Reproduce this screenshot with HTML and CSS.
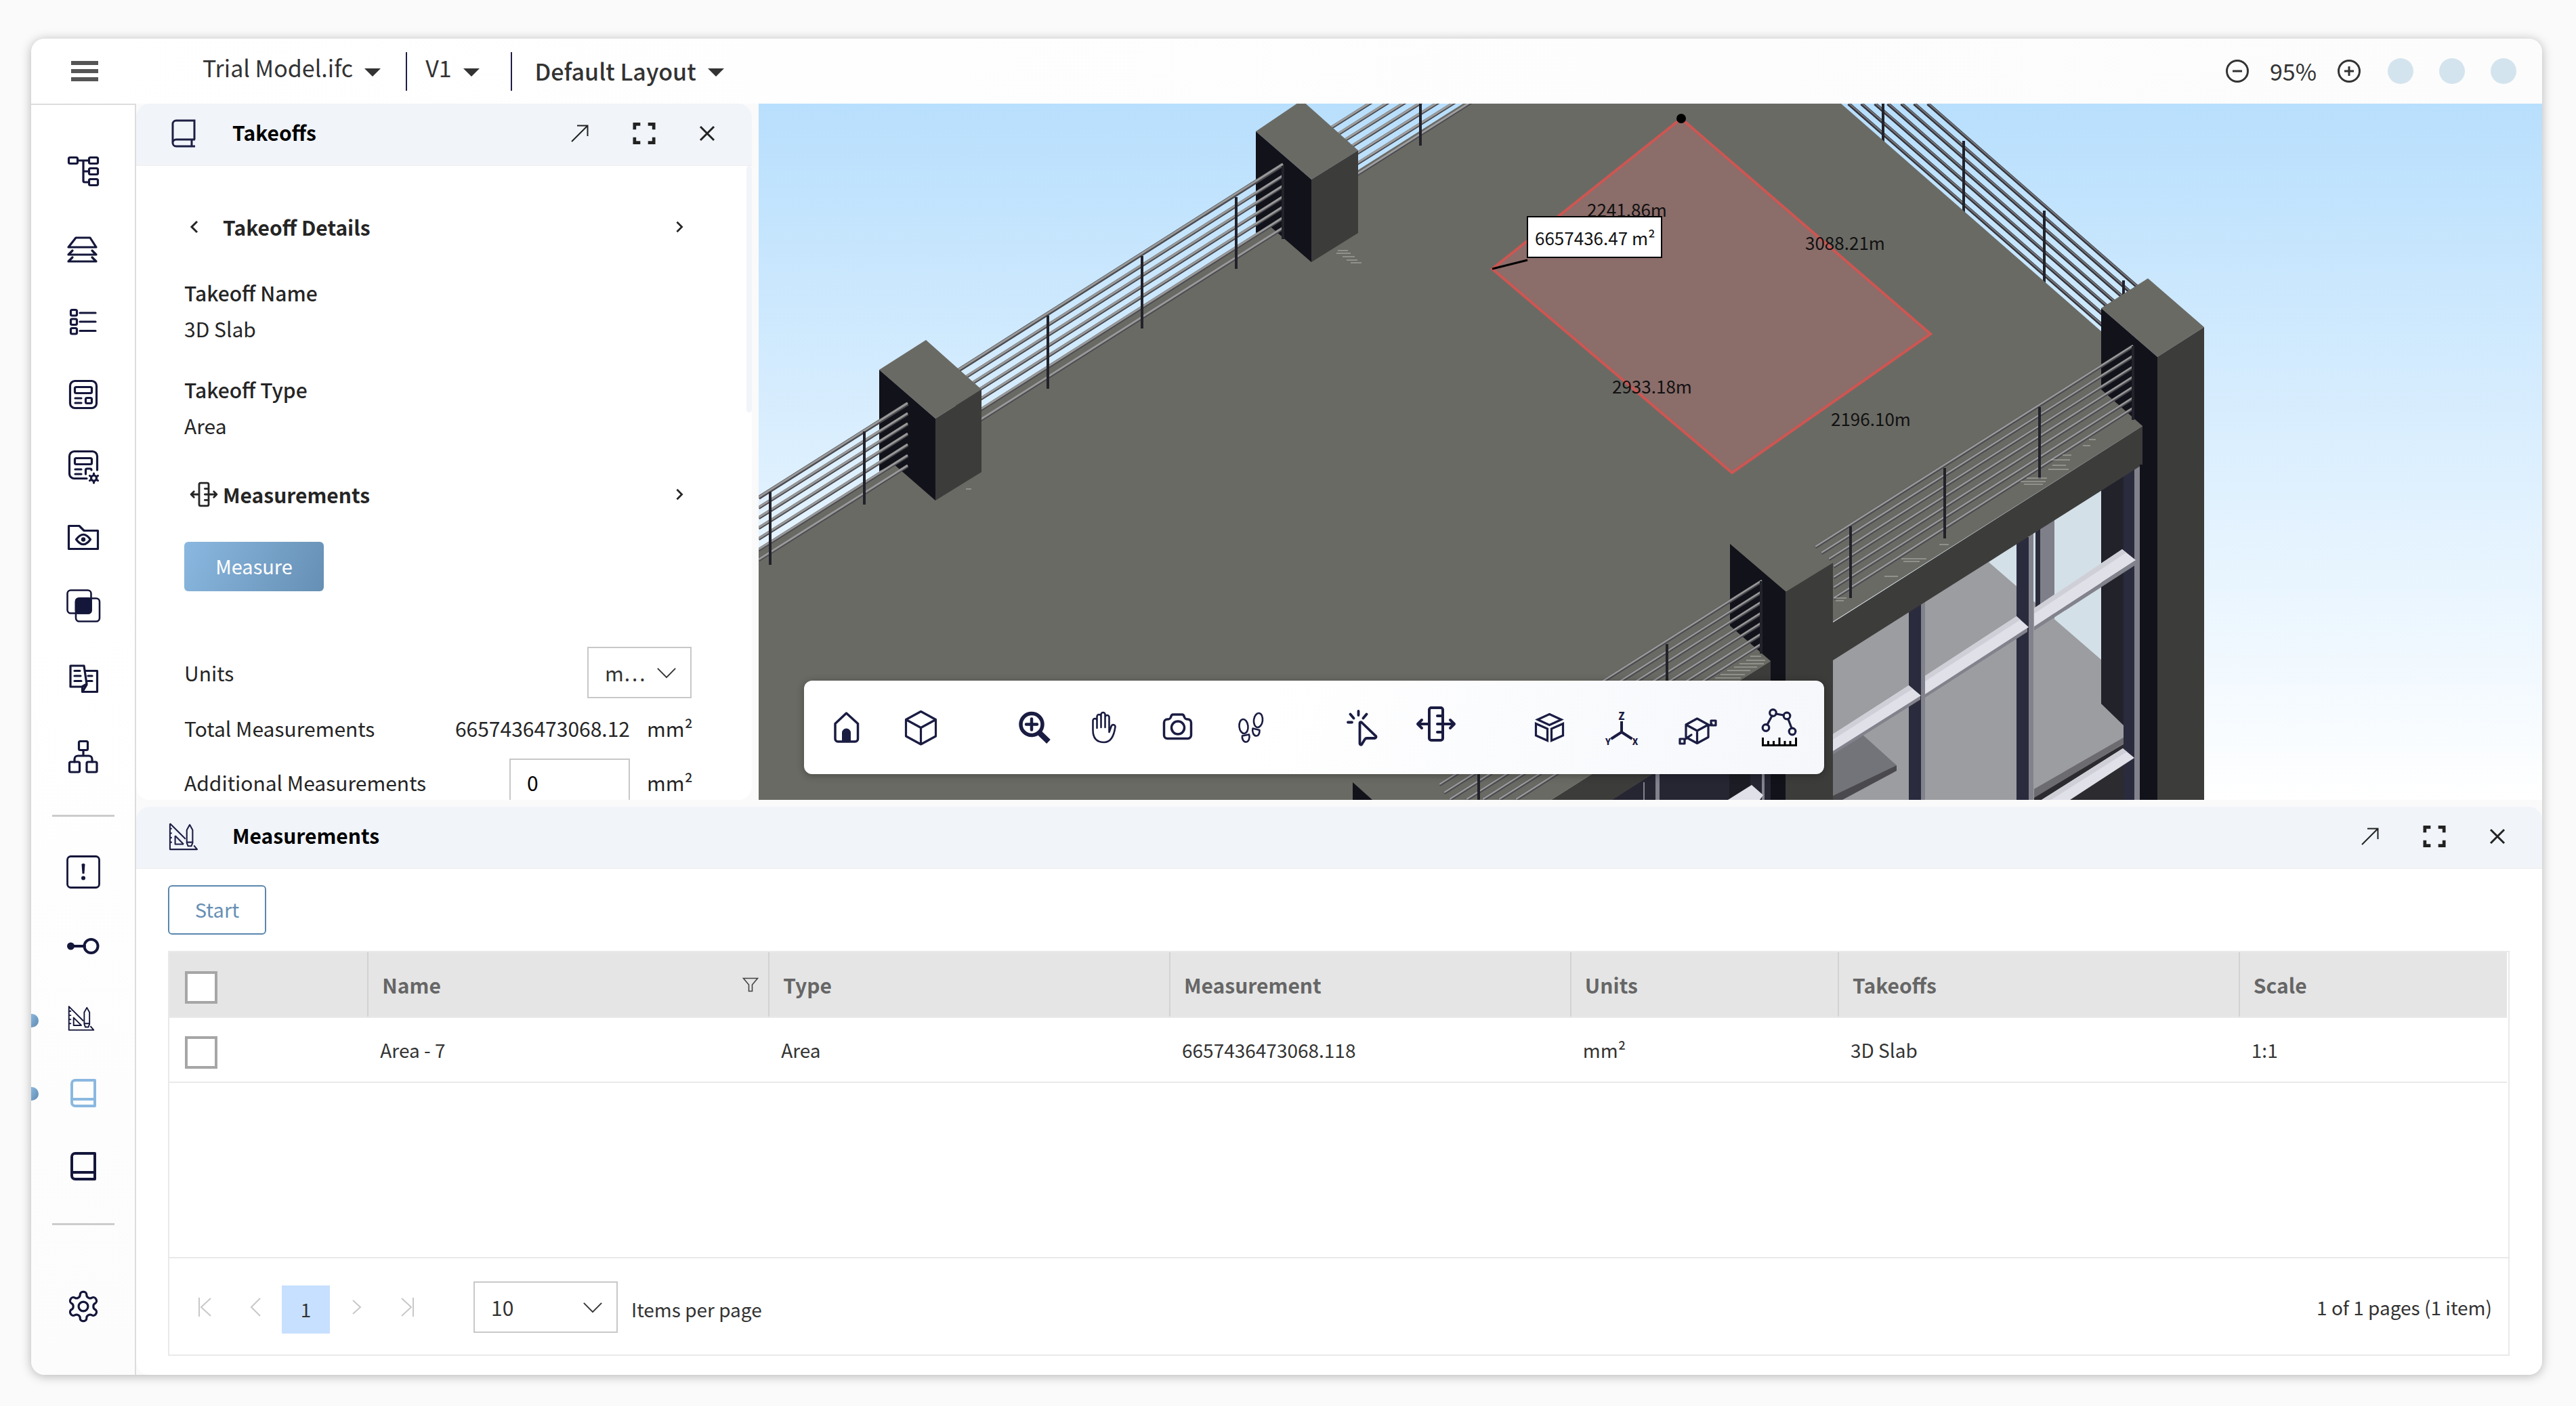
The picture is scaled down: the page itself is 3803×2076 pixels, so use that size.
FILE: index.html
```html
<!DOCTYPE html>
<html lang="en">
<head>
<meta charset="utf-8">
<meta name="viewport" content="width=device-width, initial-scale=1">
<title>Trial Model.ifc – Takeoffs</title>
<link rel="stylesheet" href="styles.css">
</head>
<body>
<svg class="defs" aria-hidden="true">
  <symbol id="i-expand" viewBox="0 0 28 28"><path d="M2 26L25 3M10 2.500H25.500V18" fill="none" stroke="currentColor" stroke-width="2"/></symbol>
  <symbol id="i-full" viewBox="0 0 36 36"><path d="M3 12V3.500H12M24 3.500H33V12M33 24V32.500H24M12 32.500H3V24" fill="none" stroke="currentColor" stroke-width="5"/></symbol>
  <symbol id="i-close" viewBox="0 0 24 24"><path d="M2 2L22 22M22 2L2 22" fill="none" stroke="currentColor" stroke-width="3"/></symbol>
  <symbol id="i-right" viewBox="0 0 14 20"><path d="M3 2L11 10L3 18" fill="none" stroke="currentColor" stroke-width="3"/></symbol>
  <symbol id="i-down" viewBox="0 0 32 18"><path d="M2 2L16 16L30 2" fill="none" stroke="currentColor" stroke-width="2"/></symbol>
  <symbol id="i-caret" viewBox="0 0 24 12"><path d="M0 0H24L12 12Z" fill="currentColor"/></symbol>
  <symbol id="i-ruler" viewBox="0 0 60 54"><g fill="none" stroke="currentColor" stroke-width="4" stroke-linecap="round" stroke-linejoin="round"><rect x="20" y="3" width="20" height="48" rx="3"/><path d="M32 15H39M32 39H39M19 27H3M9 21L3 27L9 33M32 27H57M51 21L57 27L51 33"/></g></symbol>
  <symbol id="i-measure" viewBox="0 0 46 44"><g fill="none" stroke="currentColor" stroke-width="2.200" stroke-linejoin="round"><path d="M2 2V42H44L39 36M2 2L26 26M2 10H5M2 17H5M2 24H5M2 31H5"/><path d="M10 21V34H23M10 21L23 34" /><path d="M28 12L32.500 4L37 12V32L35 37H30L28 32ZM28 31H37"/></g></symbol>
  <symbol id="i-book-thin" viewBox="0 0 36 42"><g fill="none" stroke="currentColor" stroke-width="3"><path d="M34 30V2H7A5 5 0 0 0 2 7V35A5 5 0 0 0 7 40H35M2 35A5 5 0 0 1 7 30H35M30 30V40"/></g></symbol>
  <symbol id="i-book" viewBox="0 0 72 72"><g fill="none" stroke="currentColor" stroke-width="4"><path d="M53 19H24A5 5 0 0 0 19 24V52A5 5 0 0 0 24 57H53ZM19 47H53" stroke-linejoin="round"/></g></symbol>
</svg>

<div class="app">
  <header class="topbar">
    <button class="menu-btn" type="button" aria-label="Menu"><svg viewBox="0 0 40 30"><path d="M0 3H40M0 15H40M0 27H40" stroke="#555" stroke-width="6"/></svg></button>
    <div class="doc">
      <button class="pick pick-model" type="button">Trial Model.ifc <svg class="caret"><use href="#i-caret"/></svg></button>
      <button class="pick pick-version" type="button">V1 <svg class="caret"><use href="#i-caret"/></svg></button>
    </div>
    <button class="pick pick-layout" type="button">Default Layout <svg class="caret"><use href="#i-caret"/></svg></button>
    <div class="zoom">
      <button type="button" aria-label="Zoom out"><svg viewBox="0 0 34 34"><circle cx="17" cy="17" r="15.500" fill="none" stroke="#333" stroke-width="3"/><path d="M10 17H24" stroke="#333" stroke-width="3"/></svg></button>
      <output>95%</output>
      <button type="button" aria-label="Zoom in"><svg viewBox="0 0 34 34"><circle cx="17" cy="17" r="15.500" fill="none" stroke="#333" stroke-width="3"/><path d="M10 17H24M17 10V24" stroke="#333" stroke-width="3"/></svg></button>
    </div>
    <div class="dots"><span></span><span></span><span></span></div>
  </header>

  <nav class="sidebar" aria-label="Tools">
    <div class="group">
      <button type="button" aria-label="Model tree"><svg viewBox="0 0 72 72"><rect x="14.500" y="15.500" width="13" height="9" rx="2"/><rect x="44.500" y="15.500" width="13" height="9" rx="2"/><rect x="44.500" y="31.500" width="13" height="9" rx="2"/><rect x="44.500" y="47.500" width="13" height="9" rx="2"/><path d="M28 20H44M36 20V50a2 2 0 0 0 2 2H44M36 36H44"/></svg></button>
      <button type="button" aria-label="Layers"><svg viewBox="0 0 72 72"><path d="M25 26H46L55 40H14ZM20 45L14 51H55L49 45M20 55L14 61H55L49 55"/></svg></button>
      <button type="button" aria-label="Properties"><svg viewBox="0 0 72 72"><rect x="17.500" y="24.500" width="9" height="8.500" rx="2"/><rect x="17.500" y="38" width="9" height="8.500" rx="2"/><rect x="17.500" y="51.500" width="9" height="8.500" rx="2"/><path d="M31 29H54M31 42H54M31 55.500H54"/></svg></button>
      <button type="button" aria-label="Dashboard"><svg viewBox="0 0 72 72"><rect x="16.500" y="21.500" width="39" height="40" rx="7"/><rect x="23.500" y="30.500" width="25" height="9" rx="2"/><path d="M24 47H33M24 54H33"/><rect x="39.500" y="46.500" width="9" height="8" rx="2"/></svg></button>
      <button type="button" aria-label="Dashboard settings"><svg viewBox="0 0 72 72"><path d="M41 57.500H22.500a7 7 0 0 1-7-7V24.500a7 7 0 0 1 7-7H49.500a7 7 0 0 1 7 7V45"/><rect x="23.500" y="27.500" width="25" height="9" rx="2"/><path d="M24 44H33M24 51H33M39.500 51V45a2 2 0 0 1 2-2H46a2 2 0 0 1 2 2"/><circle cx="51.500" cy="57" r="4"/><path d="M51.500 50V52M51.500 62V64M45.500 53.500L47.500 54.700M55.500 59.300L57.500 60.500M57.500 53.500L55.500 54.700M47.500 59.300L45.500 60.500"/></svg></button>
      <button type="button" aria-label="Views"><svg viewBox="0 0 72 72"><path d="M14.500 19.500H30L37 26.500H57.500V53.500H14.500ZM25.500 39.500Q36 25 46.500 39.500Q36 54 25.500 39.500Z"/><circle class="fill" cx="36" cy="39.500" r="3.200"/></svg></button>
      <button type="button" aria-label="Compare models"><svg viewBox="0 0 72 72"><g stroke-width="2.600"><rect x="12.500" y="6.500" width="35" height="34" rx="5"/><rect x="25" y="18.500" width="35" height="34" rx="5"/><rect x="25" y="18.500" width="22.500" height="22" rx="4" class="solid"/></g></svg></button>
      <button type="button" aria-label="Documents"><svg viewBox="0 0 72 72"><path d="M17 10H37L41 37L34 41H17ZM39 17.500H56.500V48.500H34.500V41M35 48L41 38M23 17.500H31M23 25H32M23 32.500H33M43 25H49M43 32.500H49"/></svg></button>
      <button type="button" aria-label="Hierarchy"><svg viewBox="0 0 72 72"><rect x="29.500" y="13.500" width="13" height="13" rx="2"/><rect x="15.500" y="44" width="15" height="15" rx="2"/><rect x="41" y="44" width="15" height="15" rx="2"/><path d="M36 27V35M23 44V40a5 5 0 0 1 5-5H44a5 5 0 0 1 5 5V44"/></svg></button>
    </div>
    <hr>
    <div class="group">
      <button type="button" aria-label="Issues"><svg viewBox="0 0 72 72"><rect x="12.500" y="12.500" width="47" height="46" rx="5" stroke-width="2.800"/><path class="fill" d="M33.500 24q2.500-2 5 0L37.500 38h-3z"/><circle class="fill" cx="36" cy="44.500" r="3"/></svg></button>
      <button type="button" aria-label="Links"><svg viewBox="0 0 72 72"><circle class="fill" cx="17.500" cy="37" r="5.500"/><g stroke-width="4"><path d="M18 37H38"/><circle cx="47.500" cy="37" r="10"/></g></svg></button>
      <button type="button" class="open" aria-label="Measurements"><svg viewBox="0 0 72 72"><use href="#i-measure" x="13" y="16" width="40" height="39"/></svg></button>
      <button type="button" class="open current" aria-label="Takeoffs"><svg viewBox="0 0 72 72"><use href="#i-book"/></svg></button>
      <button type="button" aria-label="Library"><svg viewBox="0 0 72 72"><use href="#i-book"/></svg></button>
    </div>
    <hr>
    <button type="button" class="settings" aria-label="Settings"><svg viewBox="0 0 24 24"><g><path d="M12.220 2h-.44a2 2 0 0 0-2 2v.18a2 2 0 0 1-1 1.730l-.43.25a2 2 0 0 1-2 0l-.15-.08a2 2 0 0 0-2.730.73l-.22.38a2 2 0 0 0 .73 2.730l.15.1a2 2 0 0 1 1 1.720v.51a2 2 0 0 1-1 1.740l-.15.09a2 2 0 0 0-.73 2.730l.22.38a2 2 0 0 0 2.730.73l.15-.08a2 2 0 0 1 2 0l.43.25a2 2 0 0 1 1 1.730V20a2 2 0 0 0 2 2h.44a2 2 0 0 0 2-2v-.18a2 2 0 0 1 1-1.730l.43-.25a2 2 0 0 1 2 0l.15.08a2 2 0 0 0 2.730-.73l.22-.39a2 2 0 0 0-.73-2.730l-.15-.08a2 2 0 0 1-1-1.740v-.5a2 2 0 0 1 1-1.740l.15-.09a2 2 0 0 0 .73-2.730l-.22-.38a2 2 0 0 0-2.730-.73l-.15.08a2 2 0 0 1-2 0l-.43-.25a2 2 0 0 1-1-1.730V4a2 2 0 0 0-2-2z"/><circle cx="12" cy="12" r="3.200"/></g></svg></button>
  </nav>

  <main class="workspace">
    <section class="panel takeoffs" aria-labelledby="takeoffs-title">
      <div class="panel-head">
        <svg class="head-icon"><use href="#i-book-thin"/></svg>
        <h2 id="takeoffs-title">Takeoffs</h2>
        <div class="panel-tools">
          <button type="button" aria-label="Detach"><svg width="28" height="28"><use href="#i-expand"/></svg></button>
          <button type="button" aria-label="Full screen"><svg width="34" height="34"><use href="#i-full"/></svg></button>
          <button type="button" aria-label="Close"><svg width="24" height="24"><use href="#i-close"/></svg></button>
        </div>
      </div>
      <div class="details">
        <div class="section-row">
          <button type="button" class="lead" aria-label="Back"><svg class="back" width="14" height="22"><use href="#i-right"/></svg></button>
          <h3>Takeoff Details</h3>
          <button type="button" class="more" aria-label="Expand details"><svg width="14" height="18"><use href="#i-right"/></svg></button>
        </div>
        <dl>
          <dt>Takeoff Name</dt><dd>3D Slab</dd>
          <dt>Takeoff Type</dt><dd>Area</dd>
        </dl>
        <div class="section-row">
          <span class="lead"><svg width="42" height="40"><use href="#i-ruler"/></svg></span>
          <h3>Measurements</h3>
          <button type="button" class="more" aria-label="Expand measurements"><svg width="14" height="18"><use href="#i-right"/></svg></button>
        </div>
        <button type="button" class="btn-primary">Measure</button>
        <div class="field units">
          <label for="units">Units</label>
          <span class="select"><select id="units"><option>m…</option></select><svg><use href="#i-down"/></svg></span>
        </div>
        <div class="field total"><span>Total Measurements</span><span class="num">6657436473068.12</span><span class="unit">mm²</span></div>
        <div class="field extra"><label for="extra">Additional Measurements</label><input id="extra" type="text" value="0"><span class="unit">mm²</span></div>
      </div>
    </section>

    <section class="viewer" aria-label="3D view">
      <svg class="scene" viewBox="0 0 2633 1028" preserveAspectRatio="xMidYMid slice">
        <defs>
          <linearGradient id="sky" x1="0" y1="0" x2="0" y2="1"><stop offset="0" stop-color="#b8dffd"/><stop offset="1" stop-color="#fff"/></linearGradient>
        </defs>
        <rect width="2633" height="1028" fill="url(#sky)"/>

        <!-- back right railing -->
        <g stroke="#34343c" stroke-width="5"><path d="M1609 0L1990 333M1628 0L1990 316M1648 0L1995 303M1667 0L2010 300M1687 0L2020 291M1706 0L2028 281M1726 0L2036 271"/></g>
        <g stroke="#77777c" stroke-width="2"><path d="M1609 -1L1990 332M1628 -1L1990 315M1648 -1L1995 302M1667 -1L2010 299M1687 -1L2020 290M1706 -1L2028 280M1726 -1L2036 270"/></g>
        <g stroke="#22222b" stroke-width="4"><path d="M1660 0V58M1779 55V161M1898 158V264M2015 261V290"/></g>

        <!-- roof slab -->
        <path fill="#6a6a64" d="M0 658L1040 0H1598L1983 337L2043 476L1170 1028H0Z"/>

        <!-- glazing under the roof -->
        <path fill="#9c9da1" d="M1586 815L2043 527V1028H1586Z"/>
        <path fill="#d3e0e8" d="M1816 677L1990 560V828Z"/>
        <path fill="#2a2a3a" d="M1885 620H1892V752H1885Z"/>
        <path fill="#7e7f88" d="M1892 612H1913V761L1892 743Z"/>
        <path fill="#22222b" d="M1982 560L2016 540V919L1982 886Z"/>
        <path fill="#73747a" d="M1586 958L1630 932L1680 977L1586 1028Z"/>
        <path fill="#4a4a4e" d="M1680 977V985L1600 1028H1586V1022Z"/>
        <path fill="#2b2b30" d="M1883 1024L2018 944V1028H1883Z"/>
        <path fill="#6c6c70" d="M1883 1012L2022 932V941L1883 1025Z"/>
        <g fill="#2b2b3e"><path d="M1698 740H1716V1028H1698ZM1857 640H1875V1028H1857ZM2015 540H2031V1028H2015Z"/></g>
        <g fill="#82828c"><path d="M1716 730H1722V1028H1716ZM1875 630H1882V1028H1875ZM2031 530H2039V1028H2031Z"/></g>
        <g fill="#82828c"><path d="M1883 772L2033 674V681L1883 778ZM1722 871L1873 774V780L1722 877ZM1586 955L1715 874V880L1586 961Z"/></g>
        <g fill="#e0e0e9"><path d="M1883 745L2013 658L2033 674L1883 772ZM1722 845L1857 757L1875 773L1722 872ZM1586 931L1698 859L1716 874L1586 956ZM1894 1028L2014 952L2031 966L1936 1028Z"/></g>
        <g fill="#cfcfd7"><path d="M1883 745L2013 658L2019 663L1883 753ZM1722 845L1857 757L1863 762L1722 853ZM1586 931L1698 859L1704 864L1586 939ZM1894 1028L2014 952L2020 957L1908 1028Z"/></g>
        <path fill="#262633" d="M1250 1034L1330 982H1500V1028Z"/>
        <path fill="#82828c" d="M1306 1002H1308V1028H1306ZM1324 990H1330V1028H1324ZM1481 990H1485V1028H1481Z"/>
        <path fill="#1c1c24" d="M1433 990H1464V1028H1433Z"/>
        <path fill="#e0e0e9" d="M1431 1028L1466 1006L1483 1021L1478 1028Z"/>

        <!-- roof edge beam -->
        <path fill="#3c3c3b" d="M1586 766L2043 476V533L1586 822ZM1170 1028L1494 823V880L1260 1028Z"/>

        <!-- back left railing, far bay -->
        <g stroke="#4a4a50" stroke-width="5"><path d="M840 39L905 -2M840 55L930 -2M840 70L955 -2M860 73L979 -2M870 82L1004 -2M880 91L1028 -2M880 107L1052 -2"/></g>
        <g stroke="#9d9d9d" stroke-width="3"><path d="M840 38L905 -3M840 54L930 -3M840 69L955 -3M860 72L979 -3M870 81L1004 -3M880 90L1028 -3M880 106L1052 -3"/></g>
        <path stroke="#22222b" stroke-width="4" d="M977 0V62"/>
        <path fill="#6a6a64" d="M802 -5L885 69L816 112L734 41Z"/>
        <path fill="#12121a" d="M734 41L816 112V234L756 182L734 191Z"/>
        <path fill="#3c3c3b" d="M816 112L885 69V191L816 234Z"/>

        <!-- back left railing, middle bay -->
        <g stroke="#4a4a50" stroke-width="5"><path d="M290 397L774 90" stroke-width="6"/><path d="M290 414L774 107M290 429L774 122M290 445L774 138M290 460L774 153M290 476L774 169M290 491L774 184"/></g>
        <g stroke="#999" stroke-width="3"><path d="M290 396L774 89M290 413L774 106M290 428L774 121M290 444L774 137M290 459L774 152M290 475L774 168M290 490L774 183"/></g>
        <path stroke="#22222b" stroke-width="4" d="M427 313V421M566 225V332M705 138V244M774 92V200"/>
        <path fill="#6a6a64" d="M247 349L329 422L261 465L178 393Z"/>
        <path fill="#12121a" d="M178 393L261 465V586L199 532L178 543Z"/>
        <path fill="#3c3c3b" d="M261 465L329 422V544L261 586Z"/>

        <!-- back left railing, near bay -->
        <g stroke="#4a4a50" stroke-width="5"><path d="M0 582L220 443" stroke-width="6"/><path d="M0 597L220 458M0 612L220 473M0 627L220 488M0 643L220 504M0 659L220 520M0 674L220 535"/></g>
        <g stroke="#999" stroke-width="3"><path d="M0 581L220 442M0 596L220 457M0 611L220 472M0 626L220 487M0 642L220 503M0 658L220 519M0 673L220 534"/></g>
        <path stroke="#22222b" stroke-width="4" d="M17 573V681M156 484V592"/>

        <!-- right corner column -->
        <path fill="#6a6a64" d="M2051 258L2134 330L2065 374L1982 302Z"/>
        <path fill="#12121a" d="M1982 302L2065 374V1028H2039V533H2043V476L1982 422Z"/>
        <path fill="#3c3c3b" d="M2065 374L2134 330V1028H2065Z"/>

        <!-- front column -->
        <path fill="#6a6a64" d="M1434 650L1516 721L1586 678L1504 606Z"/>
        <path fill="#12121a" d="M1434 650L1517 721V1028H1494V823L1434 771Z"/>
        <path fill="#3c3c3b" d="M1516 721L1586 678V1028H1516Z"/>
        <path fill="#12121a" d="M877 1002L906 1028H877Z"/>

        <!-- front railings -->
        <g stroke="#4a4a50" stroke-width="5"><path d="M1560 655L2029 358M1569 664L2029 373M1580 673L2029 389M1587 684L2029 404M1587 700L2029 419M1587 715L2029 435M1587 731L2029 450"/><path d="M1005 1006L1481 705M1012 1018L1481 721M1020 1028L1481 736M1045 1028L1481 752M1069 1028L1481 767M1093 1028L1481 783M1118 1028L1481 798"/></g>
        <g stroke="#999" stroke-width="2.500"><path d="M1560 654L2029 357M1569 663L2029 372M1580 672L2029 388M1587 683L2029 403M1587 699L2029 418M1587 714L2029 434M1587 730L2029 449"/><path d="M1005 1005L1481 704M1012 1017L1481 720M1020 1027L1481 735M1045 1027L1481 751M1069 1027L1481 766M1093 1027L1481 782M1118 1027L1481 797"/></g>
        <path stroke="#22222b" stroke-width="4" d="M2029 358V467M1891 448V554M1751 538V642M1612 624V730M1480 705V812M1341 798V905M1063 976V1028"/>
        <path stroke="#b8b8b4" stroke-width="1" d="M1863 558H1900M1868 562H1896M1872 553H1902M1904 540H1934M1910 534H1930M1908 526H1936M1925 519H1938M1955 505H1966M1964 496H1974M1743 651H1757M1687 672H1724M1690 676H1714M1662 698H1682M1588 730H1606M1590 734H1602M1412 848H1450M1420 843H1456M1430 837H1464M1440 832H1474M1448 827H1484M1458 822H1486M1464 816H1480M855 217H870M853 221H874M862 226H880M868 231H884M874 235H890M306 569H314"/>

        <!-- measured area -->
        <path fill="#ce7676" fill-opacity=".34" d="M1362 22L1730 340L1437 545L1083 244Z"/>
        <path fill="none" stroke="#cd5652" stroke-width="4" d="M1362 22L1730 340L1437 545L1083 244Z"/>
        <circle cx="1362" cy="22" r="7"/>
        <path stroke="#000" stroke-width="3" d="M1083 244L1135 231"/>
        <g class="dim">
          <text x="1223" y="167">2241.86m</text>
          <text x="1545" y="216">3088.21m</text>
          <text x="1260" y="428">2933.18m</text>
          <text x="1583" y="476">2196.10m</text>
          <rect x="1135" y="167" width="198" height="60" fill="#fff" stroke="#000" stroke-width="2"/>
          <text x="1146" y="209">6657436.47 m²</text>
        </g>
      </svg>
      <div class="toolbar" role="toolbar" aria-label="View tools">
        <div class="tools">
          <button type="button" aria-label="Home"><svg viewBox="0 0 72 72"><path stroke-width="3.500" d="M35.500 15L19 30.500V53a4 4 0 0 0 4 4H48.500a4 4 0 0 0 4-4V30.500Z"/><path class="fill" d="M29 57V44a6.500 6.500 0 0 1 13 0V57Z"/></svg></button>
          <button type="button" aria-label="Isometric"><svg viewBox="0 0 72 72"><path d="M37.500 12.500L59.500 24.500V49L37.500 61L15.500 49V24.500ZM15.500 24.500L37.500 36.500L59.500 24.500M37.500 36.500V61"/></svg></button>
        </div>
        <div class="tools">
          <button type="button" aria-label="Zoom"><svg viewBox="0 0 72 72"><circle cx="35" cy="31.500" r="16" stroke-width="5.500"/><path stroke-width="4.500" d="M27 31.500H43M35 23.500V39.500"/><path stroke-width="8" stroke-linecap="butt" d="M47 44.500L60 57"/></svg></button>
          <button type="button" aria-label="Pan"><svg viewBox="0 0 72 72"><path stroke-width="2.600" d="M17.500 40V26a3 3 0 0 1 6 0V37M23.500 30V20a3 3 0 0 1 6 0V36M29.500 24V17a3 3 0 0 1 6 0V36M35.500 24V21a3 3 0 0 1 6 0V43L45 33.500a3 3 0 0 1 5.500 1.500C49 46 45 58 34 58C23 58 17.500 52 17.500 40"/></svg></button>
          <button type="button" aria-label="Snapshot"><svg viewBox="0 0 72 72"><path stroke-width="3.500" d="M19.500 24C24 24 24 22 25 19.500A3.500 3.500 0 0 1 28 17H41A3.500 3.500 0 0 1 44 19.500C45 22 45 24 49.500 24A5 5 0 0 1 54.500 29V47.500A5 5 0 0 1 49.500 52.500H19.500A5 5 0 0 1 14.500 47.500V29A5 5 0 0 1 19.500 24Z"/><circle cx="35" cy="36.500" r="9.500" stroke-width="3.500"/></svg></button>
          <button type="button" aria-label="Walk"><svg viewBox="0 0 72 72"><g stroke-width="2.600"><ellipse cx="24" cy="34.500" rx="6.500" ry="10.500" transform="rotate(-6 24 34.500)"/><ellipse cx="45.500" cy="25.500" rx="6.500" ry="10.500" transform="rotate(7 45.500 25.500)"/><path d="M22 48.500L32 46.500C34 52 31 57.500 27.500 57.500S21 53 22 48.500ZM37.500 37.500L47.500 40C48 46 45 49 42 48.500S36 43 37.500 37.500Z"/></g></svg></button>
        </div>
        <div class="tools">
          <button type="button" aria-label="Select"><svg viewBox="0 0 72 72"><path stroke-width="3.800" d="M29.500 29.500V60a1.600 1.600 0 0 0 3 .8L37 53.500Q38 52 40 52H51.500a2 2 0 0 0 1.400-3.400L32 28.500a1.500 1.500 0 0 0-2.500 1ZM27.500 12V18M15.500 16.500L20.500 22.500M39.500 16.500L34.500 22.500M12 28.500H18"/></svg></button>
          <button type="button" aria-label="Measure"><svg viewBox="0 0 72 72"><use href="#i-ruler" x="4" y="4" width="60" height="54"/></svg></button>
        </div>
        <div class="tools wide">
          <button type="button" aria-label="Section box"><svg viewBox="0 0 72 72"><path stroke-linejoin="miter" d="M35.500 16.500L53 24.500L35.500 32.500L18 24.500ZM15.500 30.500L32.500 38V55.500L15.500 48ZM55.500 30.500L38.500 38V55.500L55.500 48Z"/></svg></button>
          <button type="button" aria-label="Axes"><svg viewBox="0 0 72 72"><path stroke-width="4" stroke-linecap="butt" stroke-linejoin="miter" d="M30 27V43L14.500 53M30 43L45.500 53"/><g class="axis"><text x="30" y="25" font-size="15">Z</text><text x="10" y="62" font-size="13">Y</text><text x="50" y="62" font-size="13">X</text></g></svg></button>
          <button type="button" aria-label="Move section"><svg viewBox="0 0 72 72"><path d="M29.500 23L46 32V50.500L29.500 59.500L13 50.500V32ZM13 32L29.500 41L46 32M29.500 41V59M46 34L51 31M11 54L21 47"/><rect x="50" y="26" width="7" height="7"/><rect x="4" y="53" width="7" height="7"/></svg></button>
          <button type="button" aria-label="Path measure"><svg viewBox="0 0 72 72"><path d="M34 16L45 18M28 19L21 32M52 24L57 37"/><circle cx="29.500" cy="14.500" r="4.800"/><circle cx="50" cy="19" r="4.800"/><circle cx="19" cy="36.500" r="4.800"/><circle cx="58" cy="42" r="4.800"/><path stroke="#000" stroke-width="3" stroke-linecap="butt" stroke-linejoin="miter" d="M14.500 51V62.500H63.500V51M22.500 56V62M30.500 56V62M39 51V62M47 56V62M55 56V62"/></svg></button>
        </div>
      </div>
    </section>

    <section class="panel measurements" aria-labelledby="meas-title">
      <div class="panel-head">
        <svg class="head-icon"><use href="#i-measure"/></svg>
        <h2 id="meas-title">Measurements</h2>
        <div class="panel-tools">
          <button type="button" aria-label="Detach"><svg width="28" height="28"><use href="#i-expand"/></svg></button>
          <button type="button" aria-label="Full screen"><svg width="34" height="34"><use href="#i-full"/></svg></button>
          <button type="button" aria-label="Close"><svg width="24" height="24"><use href="#i-close"/></svg></button>
        </div>
      </div>
      <div class="measure-body">
        <button type="button" class="btn-outline">Start</button>
        <div class="grid">
          <div class="grid-content">
            <table>
              <colgroup><col class="c-check"><col class="c-wide"><col class="c-wide"><col class="c-wide"><col class="c-narrow"><col class="c-wide"><col class="c-narrow"></colgroup>
              <thead><tr>
                <th><input type="checkbox" aria-label="Select all"></th>
                <th scope="col"><span class="th-name">Name <button type="button" aria-label="Filter by name"><svg viewBox="0 0 24 22"><path d="M1.500 1.500H22.500L14.500 11V20.500H9.500V11Z" fill="none" stroke="#444" stroke-width="1.600"/></svg></button></span></th>
                <th scope="col">Type</th><th scope="col">Measurement</th><th scope="col">Units</th><th scope="col">Takeoffs</th><th scope="col">Scale</th>
              </tr></thead>
              <tbody><tr>
                <td><input type="checkbox" aria-label="Select Area - 7"></td>
                <td>Area - 7</td><td>Area</td><td>6657436473068.118</td><td>mm²</td><td>3D Slab</td><td>1:1</td>
              </tr></tbody>
            </table>
          </div>
          <div class="pager">
            <div class="pages">
              <button type="button" disabled aria-label="First page"><svg viewBox="0 0 20 30"><path d="M2 1V29M19 2L5 15L19 28"/></svg></button>
              <button type="button" disabled aria-label="Previous page"><svg viewBox="0 0 20 30"><path d="M17 2L4 15L17 28"/></svg></button>
              <button type="button" class="active">1</button>
              <button type="button" disabled aria-label="Next page"><svg viewBox="0 0 20 30"><path d="M4 5L15 15L4 25"/></svg></button>
              <button type="button" disabled aria-label="Last page"><svg viewBox="0 0 20 30"><path d="M18 1V29M1 2L15 15L1 28"/></svg></button>
            </div>
            <span class="select"><select id="page-size"><option>10</option></select><svg><use href="#i-down"/></svg></span>
            <label for="page-size">Items per page</label>
            <span class="summary">1 of 1 pages (1 item)</span>
          </div>
        </div>
      </div>
    </section>
  </main>
</div>
</body>
</html>
```
FILE: styles.css
```css
* { box-sizing: border-box; }

body {
  margin: 0;
  height: 100vh;
  padding: 57px 50px 46px 46px;
  background: #fafafa;
  color: #252525;
  font: 30px/42px "Noto Sans CJK SC", "Noto Sans", sans-serif;
}

button {
  padding: 0;
  border: 0;
  background: none;
  color: inherit;
  font: inherit;
}

svg { display: block; }
.defs { position: absolute; width: 0; height: 0; }
h2, h3 { margin: 0; font-size: 30px; font-weight: 700; }

.app {
  display: grid;
  grid-template: 96px minmax(0, 1fr) / 155px minmax(0, 1fr);
  height: 100%;
  border-radius: 20px;
  background: #fafafa;
  box-shadow: 0 2px 16px rgba(0, 0, 0, .28);
  overflow: hidden;
}

/* Top bar */
.topbar {
  grid-column: 1 / -1;
  display: flex;
  align-items: center;
  padding: 0 38px 0 59px;
  background: linear-gradient(90deg, #fff, #fcfcfc);
  color: #333;
  font-size: 34px;
}
.menu-btn svg { width: 40px; height: 30px; }
.doc { display: flex; margin-left: 154px; }
.pick { display: flex; align-items: center; gap: 17px; height: 57px; white-space: nowrap; }
.pick-model, .pick-version { border-right: 2px solid #1d1f45; padding-bottom: 10px; }
.pick-model { padding-right: 37px; }
.pick-version { padding: 0 46px 10px 27px; }
.pick-layout { padding-left: 34px; font-weight: 500; }
.caret { width: 24px; height: 12px; margin-top: 4px; }
.pick-model .caret, .pick-version .caret { margin-top: 14px; }
.zoom { display: flex; align-items: center; gap: 31px; margin-left: auto; }
.zoom svg { width: 34px; height: 34px; }
.dots { display: flex; gap: 38px; margin-left: 40px; }
.dots span { width: 38px; height: 38px; border-radius: 50%; background: #d4e4ee; }

/* Sidebar */
.sidebar {
  display: flex;
  flex-direction: column;
  padding-top: 44px;
  border-top: 2px solid #ddd;
  border-right: 2px solid #ddd;
  background: linear-gradient(#fff, #fff 40%, #fcfcfd);
  color: #14163a;
}
.group { display: flex; flex-direction: column; }
.sidebar button { position: relative; display: grid; place-items: center; height: 108px; }
.sidebar svg, .toolbar svg {
  width: 72px;
  height: 72px;
  fill: none;
  stroke: currentColor;
  stroke-width: 3.2px;
  stroke-linejoin: round;
  stroke-linecap: round;
}
.sidebar .solid, .sidebar .fill, .toolbar .fill { fill: currentColor; }
.fill { stroke: none; }
.sidebar hr { width: 92px; height: 3px; margin: 32px auto 28px; border: 0; background: #ccc; flex: none; }
.sidebar .open::before {
  content: "";
  position: absolute;
  left: 0;
  top: 47px;
  width: 11px;
  height: 20px;
  border-radius: 0 10px 10px 0;
  background: linear-gradient(120deg, #8ab8e0, #5f88ae);
}
.sidebar .current { color: #8ab8e0; }
.sidebar .settings { margin-top: 38px; }
.sidebar .settings svg { width: 52px; height: 52px; stroke-width: 1.5px; }

/* Workspace */
.workspace {
  display: grid;
  grid-template: minmax(0, 1fr) auto / 909px minmax(0, 1fr);
  gap: 10px;
}
.panel { display: flex; flex-direction: column; border-radius: 20px; background: #fff; overflow: hidden; min-height: 0; }
.panel-head {
  display: flex;
  align-items: center;
  flex: none;
  height: 92px;
  padding: 0 54px 2px 48px;
  background: #f1f4f9;
  border-bottom: 2px solid #f1f1f3;
  color: #000;
}
.head-icon { width: 44px; height: 42px; margin-right: 50px; color: #1d1f45; }
.panel-head h2 { line-height: 40px; padding-bottom: 4px; }
.panel-tools { display: flex; gap: 64px; margin-left: auto; color: #222; align-items: center; }

/* Takeoffs */
.takeoffs { position: relative; }
.takeoffs::after {
  content: "";
  position: absolute;
  top: 92px;
  right: 0;
  width: 8px;
  height: 364px;
  border-radius: 4px;
  background: #f1f4f9;
}
.details { padding: 66px 89px 0 71px; min-height: 0; overflow: hidden; }
.section-row { display: flex; align-items: center; height: 48px; }
.lead { display: flex; width: 57px; padding-left: 8px; }
.back { transform: scaleX(-1); }
.more { margin-left: auto; margin-right: 11px; }
dl { margin: 52px 0 57px; }
dt { font-weight: 500; }
dd { margin: 11px 0 0; }
dd + dt { margin-top: 48px; }
.btn-primary, .btn-outline { display: block; height: 73px; border-radius: 6px; font-size: 29px; padding-bottom: 4px; }
.btn-primary { width: 206px; margin-top: 46px; background: linear-gradient(115deg, #8ab8e0, #668fb4); color: #fff; }
.field { display: flex; align-items: center; }
.field > :first-child { margin-right: auto; }
.field .unit { width: 66px; margin-left: 25px; }
.units { margin-top: 82px; }
.total { margin-top: 23px; }
.extra { margin-top: 24px; }
.extra input { width: 178px; height: 70px; padding: 0 24px; border: 2px solid #c8c8c8; font: inherit; color: #000; }
.select { position: relative; display: block; width: 154px; height: 76px; }
.select select {
  appearance: none;
  width: 100%;
  height: 100%;
  padding: 0 24px;
  border: 2px solid #c8c8c8;
  border-radius: 0;
  background: #fff;
  color: #333;
  font: inherit;
}
.select svg { position: absolute; right: 22px; top: 30px; width: 30px; height: 17px; color: #333; pointer-events: none; }

/* Viewer */
.viewer { position: relative; min-height: 0; overflow: hidden; }
.scene { position: absolute; inset: 0; width: 100%; height: 100%; }
.dim { font-size: 26px; fill: #111; }
.toolbar {
  position: absolute;
  left: 67px;
  bottom: 38px;
  display: flex;
  align-items: center;
  gap: 58px;
  height: 138px;
  padding: 0 15px 0 9px;
  border-radius: 12px;
  background: linear-gradient(110deg, #fff 45%, #f5f7fb);
  box-shadow: 0 2px 12px rgba(0, 0, 0, .3);
  color: #1a1c42;
}
.tools { display: flex; }
.tools.wide { gap: 4px; }
.tools button { display: grid; place-items: center; width: 108px; height: 108px; }
.axis { fill: currentColor; stroke: none; font-weight: 900; text-anchor: middle; }

/* Measurements */
.measurements { grid-column: 1 / -1; }
.measure-body { padding: 24px 48px 28px 47px; }
.btn-outline { width: 145px; border: 2px solid #5b87ae; background: #fff; color: #668fb4; }
.grid { margin-top: 24px; border: 2px solid #e9e9e9; }
.grid-content { height: 450px; padding-right: 2px; }
table { width: 100%; table-layout: fixed; border-collapse: collapse; font-size: 28px; color: #333; }
.c-check { width: 8.5%; }
.c-wide { width: 17.15%; }
.c-narrow { width: 11.45%; }
th, td { height: 96px; padding: 0 20px; text-align: left; border-bottom: 2px solid #e9e9e9; }
td + td { padding-left: 18px; }
th { background: #e5e5e5; color: #666; font-size: 30px; font-weight: 700; }
th + th { border-left: 2px solid #d2d2d2; }
.th-name { display: flex; justify-content: space-between; align-items: center; margin-right: -6px; }
.th-name svg { width: 24px; height: 22px; }
input[type="checkbox"] {
  appearance: none;
  display: block;
  width: 48px;
  height: 48px;
  margin: 8px 0 0 3px;
  border: 4px solid #a6a6a6;
  background: #fff;
}
.pager {
  display: flex;
  align-items: center;
  height: 144px;
  padding: 2px 24px 0 16px;
  border-top: 2px solid #e9e9e9;
  font-size: 28px;
  color: #333;
}
.pages { display: flex; gap: 4px; align-items: center; margin-right: 62px; }
.pages button { display: grid; place-items: center; width: 71px; height: 71px; }
.pages .active { background: #c7e0ff; }
.pages svg { width: 20px; height: 30px; fill: none; stroke: #c8c8c8; stroke-width: 2px; }
.pager .select { width: 213px; margin-right: 20px; font-size: 30px; }
.pages .active, .pager label { margin-top: 6px; }
.summary { margin-left: auto; }
```
